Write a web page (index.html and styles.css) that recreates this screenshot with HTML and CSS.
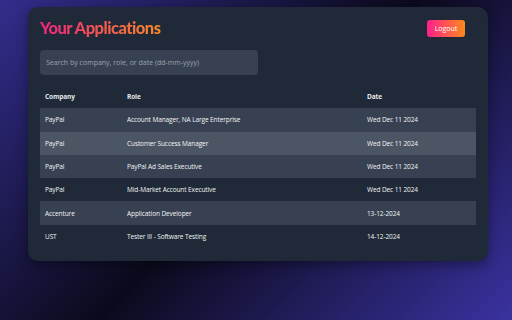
FILE: index.html
```html
<!DOCTYPE html>
<html>
<head>
<meta charset="utf-8">
<link rel="stylesheet" href="styles.css">
</head>
<body>
<div class="card">
  <div class="header">
    <h1 class="title">Your Applications</h1>
    <button class="logout">Logout</button>
  </div>
  <input class="search" type="text" placeholder="Search by company, role, or date (dd-mm-yyyy)">
  <table class="apps">
    <thead>
      <tr><th class="c1">Company</th><th class="c2">Role</th><th>Date</th></tr>
    </thead>
    <tbody>
      <tr class="alt"><td>PayPal</td><td>Account Manager, NA Large Enterprise</td><td>Wed Dec 11 2024</td></tr>
      <tr class="hover"><td>PayPal</td><td>Customer Success Manager</td><td>Wed Dec 11 2024</td></tr>
      <tr class="alt"><td>PayPal</td><td>PayPal Ad Sales Executive</td><td>Wed Dec 11 2024</td></tr>
      <tr><td>PayPal</td><td>Mid-Market Account Executive</td><td>Wed Dec 11 2024</td></tr>
      <tr class="alt"><td>Accenture</td><td>Application Developer</td><td>13-12-2024</td></tr>
      <tr><td>UST</td><td>Tester III - Software Testing</td><td>14-12-2024</td></tr>
    </tbody>
  </table>
</div>
</body>
</html>
```
FILE: styles.css
```css
html, body {
  margin: 0;
  height: 100%;
}
body {
  background: linear-gradient(135deg, #332d8c 0%, #0b0a1c 50%, #3a32a0 100%);
  font-family: "Open Sans", "Noto Sans", sans-serif;
  padding: 7px 0 0 28px;
  box-sizing: border-box;
}
.card {
  width: 460px;
  box-sizing: border-box;
  background: #1f2937;
  border-radius: 10px;
  padding: 12px 12px 13px 12px;
  box-shadow: 0 4px 12px rgba(0,0,0,0.35);
}
.header {
  display: flex;
  justify-content: space-between;
  align-items: center;
  height: 18px;
  padding-right: 11px;
}
.title {
  margin: 0;
  font-family: "Lato", "Open Sans", sans-serif;
  font-size: 16.5px;
  font-weight: 900;
  letter-spacing: -0.5px;
  line-height: 18px;
  background: linear-gradient(90deg, #f0247f, #f68a28);
  -webkit-background-clip: text;
  background-clip: text;
  color: transparent;
}
.logout {
  width: 38px;
  height: 17px;
  border: none;
  border-radius: 3px;
  background: linear-gradient(90deg, #ff1f8a, #fb8a1c);
  color: #fff;
  font-family: inherit;
  font-size: 7px;
  padding: 0;
}
.search {
  display: block;
  margin-top: 13px;
  width: 218px;
  height: 25px;
  box-sizing: border-box;
  border: none;
  border-radius: 4px;
  background: #374151;
  padding: 0 6px;
  font-family: inherit;
  font-size: 7px;
  color: #e5e7eb;
  outline: none;
}
.search::placeholder {
  color: #9ca3af;
}
.apps {
  margin-top: 10px;
  width: 436px;
  border-collapse: collapse;
  font-size: 6.5px;
  letter-spacing: -0.1px;
  color: #f3f4f6;
}
.apps th, .apps td {
  height: 23.3px;
  padding: 0 0 0 5px;
  text-align: left;
}
.apps th {
  font-weight: 700;
  color: #e5e7eb;
}
.c1 { width: 77px; }
.c2 { width: 235px; }
.apps tr.alt { background: #374151; }
.apps tr.hover { background: #4b5563; }
```
